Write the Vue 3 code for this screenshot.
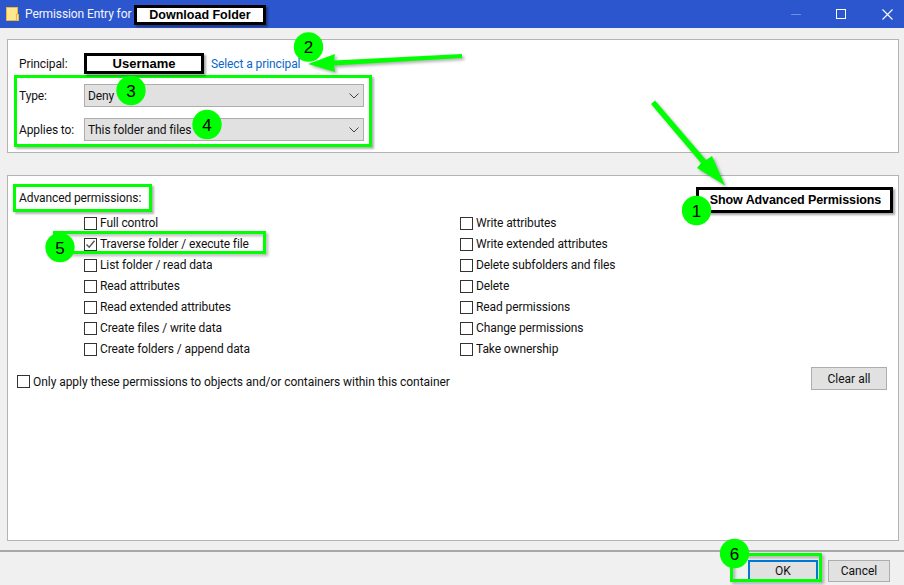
<script setup>
const leftPerms = [
  { label: 'Full control' },
  { label: 'Traverse folder / execute file', checked: true },
  { label: 'List folder / read data' },
  { label: 'Read attributes' },
  { label: 'Read extended attributes' },
  { label: 'Create files / write data' },
  { label: 'Create folders / append data' },
]
const rightPerms = [
  { label: 'Write attributes' },
  { label: 'Write extended attributes' },
  { label: 'Delete subfolders and files' },
  { label: 'Delete' },
  { label: 'Read permissions' },
  { label: 'Change permissions' },
  { label: 'Take ownership' },
]
const badges = [
  { n: 1, x: 696.5, y: 210.5 },
  { n: 2, x: 308.5, y: 47 },
  { n: 3, x: 131, y: 90.5 },
  { n: 4, x: 207, y: 124.5 },
  { n: 5, x: 60, y: 247.5 },
  { n: 6, x: 734.5, y: 553.5 },
]
const columns = [leftPerms, rightPerms]
const selects = [
  { label: 'Type:', value: 'Deny' },
  { label: 'Applies to:', value: 'This folder and files' },
]
</script>

<template>
  <div class="window">
    <header class="titlebar">
      <svg class="folder" width="14" height="16" viewBox="0 0 14 16">
        <rect x="0.5" y="1.5" width="11" height="13" fill="#ffe88f" stroke="#e8b93a" />
        <rect x="10.5" y="8.5" width="2" height="6" fill="#ffe88f" stroke="#e8b93a" />
      </svg>
      <span class="title">Permission Entry for</span>
      <span class="redact title-redact">Download Folder</span>
      <div class="controls">
        <span class="min"></span>
        <span class="max"></span>
        <svg class="close" width="11" height="11" viewBox="0 0 11 11">
          <path d="M0.5 0.5 L10.5 10.5 M10.5 0.5 L0.5 10.5" stroke="#fff" stroke-width="1.1" fill="none" />
        </svg>
      </div>
    </header>

    <section class="panel top">
      <div class="principal">
        <span class="field-label">Principal:</span>
        <span class="redact user">Username</span>
        <a class="link">Select a principal</a>
      </div>
      <div class="hl selects">
        <div v-for="s in selects" :key="s.label" class="select-row">
          <span class="field-label">{{ s.label }}</span>
          <div class="select">
            <span>{{ s.value }}</span>
            <svg width="10" height="6" viewBox="0 0 10 6">
              <path d="M0.5 0.5 L5 5 L9.5 0.5" stroke="#444" stroke-width="1" fill="none" />
            </svg>
          </div>
        </div>
      </div>
    </section>

    <section class="panel perms">
      <div class="perm-head">
        <span class="hl adv">Advanced permissions:</span>
        <span class="redact show">Show Advanced Permissions</span>
      </div>
      <div class="perm-grid">
        <div v-for="(col, i) in columns" :key="i" class="perm-col">
          <div v-for="p in col" :key="p.label" class="perm">
            <span class="box">
              <svg v-if="p.checked" width="11" height="11" viewBox="0 0 11 11">
                <path d="M1.5 5.5 L4.2 8.2 L9.5 1.8" stroke="#555" stroke-width="1.4" fill="none" />
              </svg>
            </span>
            <span class="perm-text">{{ p.label }}</span>
          </div>
        </div>
      </div>
      <div class="apply-row">
        <div class="apply">
          <span class="box"></span>
          <span>Only apply these permissions to objects and/or containers within this container</span>
        </div>
        <button class="btn clear">Clear all</button>
      </div>
    </section>

    <footer class="footer">
      <button class="btn ok">OK</button>
      <button class="btn cancel">Cancel</button>
    </footer>

    <svg class="overlay" width="904" height="585" viewBox="0 0 904 585">
      <g class="shadowed">
        <rect x="54.5" y="232.5" width="210" height="20" fill="none" stroke="#00ff00" stroke-width="3" />
        <rect x="731.5" y="554.5" width="89" height="26" fill="none" stroke="#00ff00" stroke-width="3" />
        <path d="M462 54 L334 60.5 L335 54 L308 64 L335 72 L334 65.5 L462 58 Z" fill="#00ff00" />
        <path d="M655 100.5 L651 104 L701 163 L697 168 L725 185.5 L712 156 L706 160 Z" fill="#00ff00" />
      </g>
      <g v-for="b in badges" :key="b.n">
        <circle :cx="b.x" :cy="b.y" r="14.7" fill="#00ff00" />
        <text :x="b.x" :y="b.y + 6" class="badge-num" text-anchor="middle">{{ b.n }}</text>
      </g>
    </svg>
  </div>
</template>

<style scoped>
.window {
  position: relative;
  width: 904px;
  height: 585px;
  overflow: hidden;
  display: flex;
  flex-direction: column;
  background: #f0f0f0;
  font-family: Roboto, "Open Sans", sans-serif;
  font-size: 12px;
  letter-spacing: -0.1px;
  color: #111;
}
.titlebar {
  height: 28px;
  flex: none;
  background: #2b56cd;
  display: flex;
  align-items: center;
  padding-left: 6px;
  color: #fff;
}
.folder { flex: none; }
.title { margin-left: 5px; color: #f2f5ff; width: 106px; white-space: nowrap; }
.redact {
  box-sizing: border-box;
  display: flex;
  align-items: center;
  justify-content: center;
  background: #fff;
  border: 3px solid #000;
  box-shadow: 2px 2px 2px rgba(0, 0, 0, 0.35);
  font-family: "Liberation Sans", Arial, sans-serif;
  font-weight: 700;
  font-size: 13px;
  letter-spacing: 0;
  color: #000;
}
.title-redact { margin: 2px 0 0 3px; width: 132px; height: 20px; font-size: 12.5px; }
.controls {
  margin-left: auto;
  display: flex;
  align-items: center;
}
.min { width: 10px; height: 1px; background: #6f8fdf; margin-right: 35px; }
.max { box-sizing: border-box; width: 10px; height: 10px; border: 1px solid #fff; margin-right: 36px; }
.close { margin-right: 11px; }

.panel {
  box-sizing: border-box;
  background: #fff;
  border: 1px solid #b4b4b4;
  margin: 0 5px 0 7px;
  flex: none;
}
.top {
  margin-top: 11px;
  height: 114px;
  padding: 13px 0 0 11px;
}
.principal { display: flex; align-items: center; height: 21px; }
.field-label { flex: none; width: 65px; }
.user { width: 120px; height: 21px; margin-right: 7px; }
.link { color: #0a66cc; }
.selects {
  box-sizing: border-box;
  margin: 1px 0 0 -5px;
  width: 358px;
  height: 72px;
  padding: 6px 5px 0 2px;
}
.hl {
  border: 3px solid #00ff00;
  box-shadow: 2px 2px 2px rgba(0, 0, 0, 0.3);
}
.select-row { display: flex; align-items: center; margin-bottom: 11px; }
.select {
  box-sizing: border-box;
  flex: none;
  width: 280px;
  height: 23px;
  background: #e1e1e1;
  border: 1px solid #adadad;
  display: flex;
  align-items: center;
  justify-content: space-between;
  padding: 0 4px 0 3px;
}

.perms {
  margin-top: 22px;
  flex: 1;
  margin-bottom: 9px;
  min-height: 0;
}
.perm-head {
  display: flex;
  justify-content: space-between;
  align-items: flex-start;
  padding: 8px 5px 0 5px;
  height: 37px;
  box-sizing: border-box;
}
.adv {
  box-sizing: border-box;
  width: 139px;
  height: 28px;
  padding-left: 3px;
  display: flex;
  align-items: center;
  white-space: nowrap;
}
.show { width: 197px; height: 26px; margin-top: 3px; font-size: 12.5px; letter-spacing: -0.1px; padding-left: 2px; }
.perm-grid { display: flex; padding-left: 76px; }
.perm-col:first-child { width: 376px; }
.perm { display: flex; align-items: center; height: 21px; gap: 3px; white-space: nowrap; }
.perm-text { margin-bottom: 2px; }
.box {
  box-sizing: border-box;
  flex: none;
  width: 13px;
  height: 13px;
  border: 1px solid #333;
  background: #fff;
  display: flex;
  align-items: center;
  justify-content: center;
}
.apply-row {
  display: flex;
  justify-content: space-between;
  align-items: flex-start;
  margin-top: 7px;
  padding: 0 11px 0 9px;
}
.apply { display: flex; align-items: center; gap: 3px; margin-top: 6px; height: 17px; white-space: nowrap; letter-spacing: -0.05px; }
.btn {
  box-sizing: border-box;
  background: #e1e1e1;
  border: 1px solid #adadad;
  font: inherit;
  color: #111;
  padding: 0;
}
.clear { width: 76px; height: 23px; }
.footer {
  flex: none;
  height: 35px;
  box-sizing: border-box;
  border-top: 2px solid #a8a8a8;
  display: flex;
  justify-content: flex-end;
  align-items: flex-start;
  padding: 8px 14px 0 0;
  gap: 10px;
}
.ok { width: 70px; height: 22px; border: 2px solid #0078d7; }
.cancel { width: 62px; height: 22px; }

.overlay { position: absolute; left: 0; top: 0; pointer-events: none; }
.shadowed { filter: drop-shadow(2px 2px 1.5px rgba(0, 0, 0, 0.3)); }
.badge-num { font-family: "Liberation Sans", Arial, sans-serif; font-size: 17px; fill: #000; }
</style>
